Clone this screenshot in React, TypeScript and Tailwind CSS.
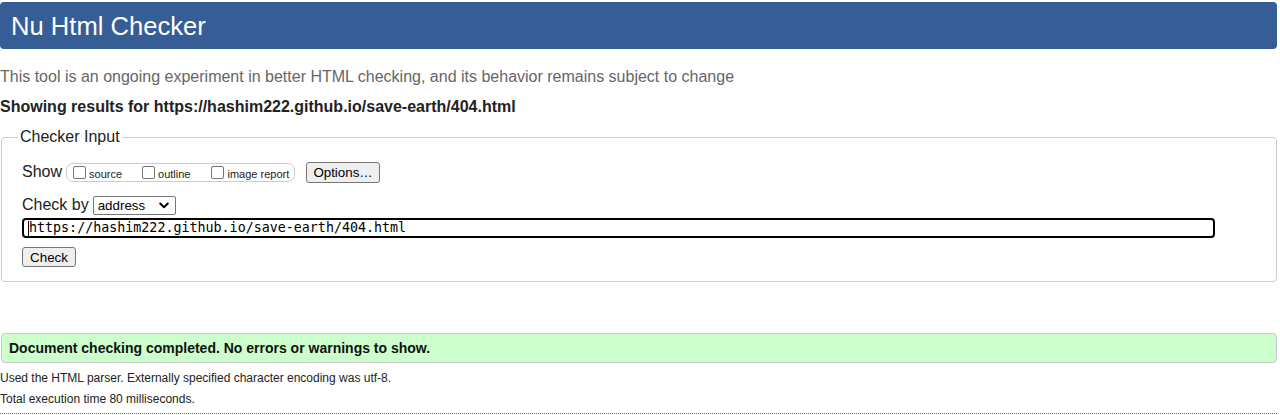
import React from "react";

function Box({ label, extra }: { label: string; extra?: boolean }) {
  return (
    <span className={`flex items-center ${extra ? "ml-[1px]" : ""}`}>
      <span className="inline-block w-[13px] h-[13px] border border-[#767676] rounded-[2px] bg-white"></span>
      <span className="ml-[3px] text-[11px] leading-[13px] text-[#222] relative top-[2px]">{label}</span>
    </span>
  );
}

export default function App() {
  return (
    <div className="w-[1277px] font-['Liberation_Sans',Arial,sans-serif] text-[#222] bg-white pb-[1px]">
      <div className="mt-[2px] h-[47px] bg-[#365d95] rounded-[4px] pl-[11px] flex items-center">
        <h1 className="text-white text-[25.6px] leading-[30px] font-normal">Nu Html Checker</h1>
      </div>
      <p className="mt-[19px] text-[16px] leading-[18px] text-[#666]">
        This tool is an ongoing experiment in better HTML checking, and its behavior remains subject to change
      </p>
      <p className="mt-[12px] text-[16px] leading-[18px] font-bold text-[#222]">
        Showing results for https://hashim222.github.io/save-earth/404.html
      </p>
      <fieldset className="mt-[12px] ml-[1px] w-[1276px] border border-[#ccc] rounded-[4px] pb-[14px]">
        <legend className="ml-[16px] px-[2px] text-[16px] leading-[18px] text-[#222]">Checker Input</legend>
        <div className="pl-[20px]">
          <div className="mt-[15px] h-[22px] flex items-center">
            <span className="text-[16px] leading-[18px]">Show</span>
            <div className="ml-[4px] h-[19px] w-[229px] border border-[#ccc] rounded-[7px] flex items-center pl-[6px] gap-[20px]">
              <Box label="source" />
              <Box label="outline" />
              <Box label="image report" extra />
            </div>
            <button className="ml-[11px] w-[74px] h-[21px] bg-[#efefef] border border-[#767676] rounded-[3px] text-[13.33px] leading-[15px] text-black flex items-center justify-center">
              Options…
            </button>
          </div>
          <div className="mt-[12px] h-[20px] flex items-center">
            <span className="text-[16px] leading-[18px]">Check by</span>
            <div className="ml-[4px] w-[83px] h-[19px] border border-[#767676] rounded-[2px] bg-white flex items-center pl-[4px] pr-[6px] justify-between">
              <span className="text-[13.33px] leading-[15px] text-black">address</span>
              <svg width="10" height="7" viewBox="0 0 10 7">
                <path d="M1.2 1.5 L5 5.2 L8.8 1.5" fill="none" stroke="#000" strokeWidth="1.9" strokeLinecap="round" strokeLinejoin="round" />
              </svg>
            </div>
          </div>
          <div className="mt-[3px] w-[1193px] h-[20px] border-2 border-black rounded-[4px] flex items-center pl-[4px]">
            <span className="w-[1px] h-[15px] bg-black"></span>
            <span className="font-['DejaVu_Sans_Mono',monospace] text-[13.33px] leading-[16px] text-black">
              https://hashim222.github.io/save-earth/404.html
            </span>
          </div>
          <button className="mt-[9px] w-[54px] h-[20px] bg-[#efefef] border border-[#767676] rounded-[3px] text-[13.33px] leading-[15px] text-black flex items-center justify-center">
            Check
          </button>
        </div>
      </fieldset>
      <div className="mt-[51px] ml-[1px] h-[30px] bg-[#ccffcc] border border-[#c8c8c8] rounded-[4px] flex items-center pl-[7px]">
        <p className="text-[14px] leading-[16px] font-bold text-[#111]">Document checking completed. No errors or warnings to show.</p>
      </div>
      <p className="mt-[8px] text-[12px] leading-[14px] text-[#222]">Used the HTML parser. Externally specified character encoding was utf-8.</p>
      <p className="mt-[7px] text-[12px] leading-[14px] text-[#222]">Total execution time 80 milliseconds.</p>
      <div className="mt-[7px] border-b border-dotted border-[#666]"></div>
    </div>
  );
}
